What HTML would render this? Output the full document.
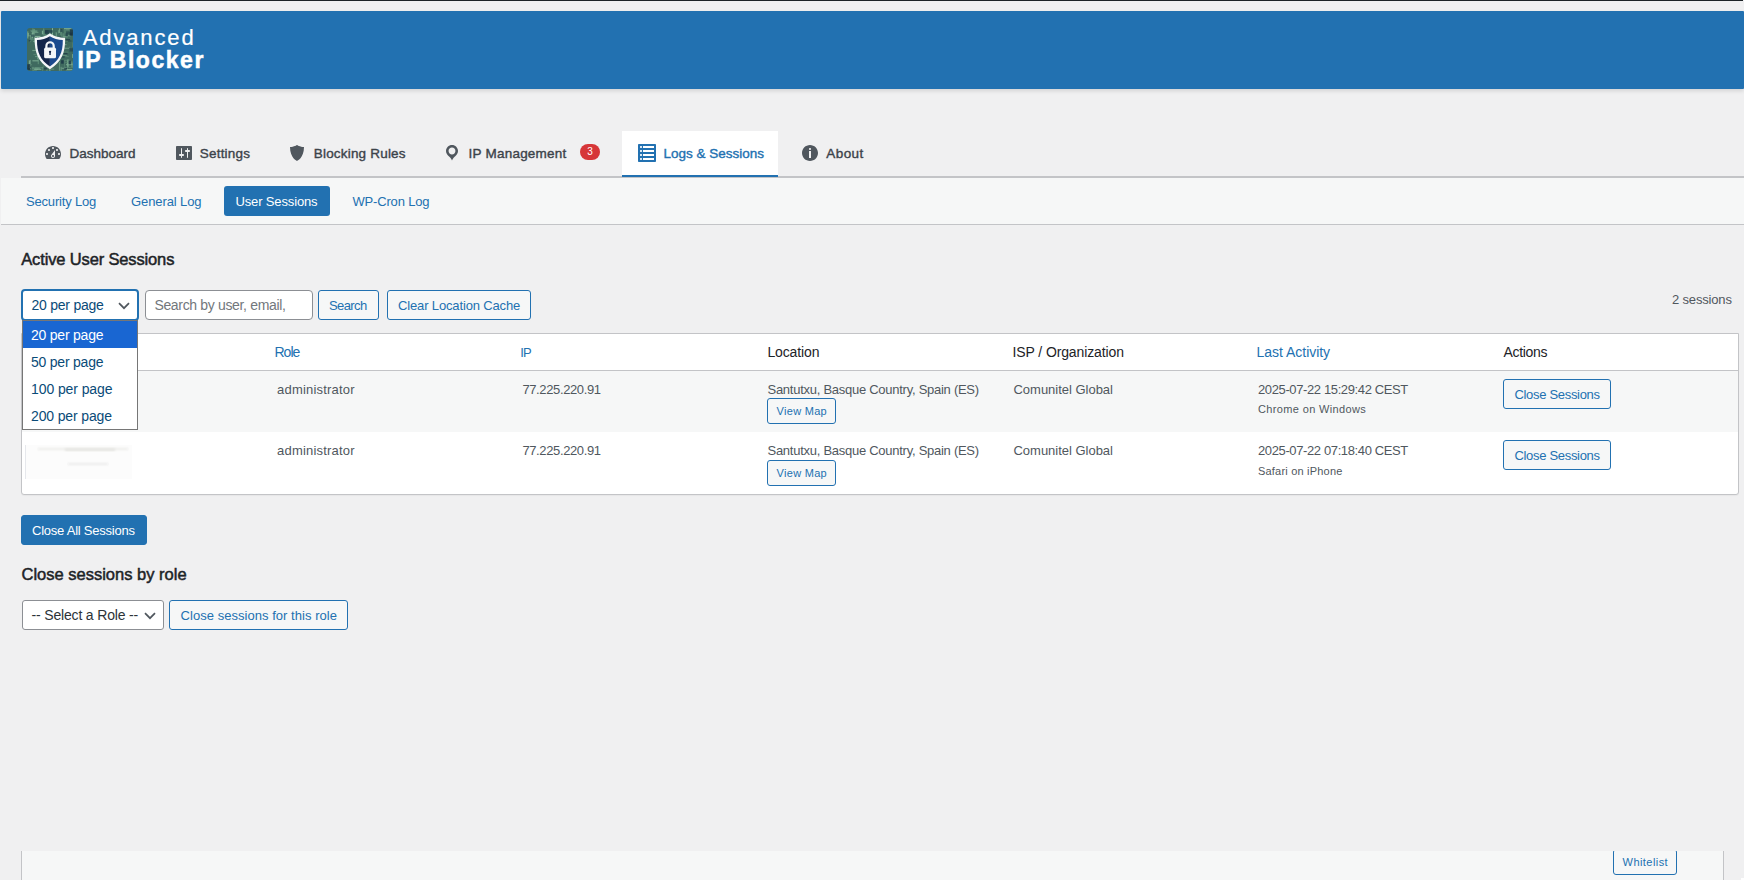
<!DOCTYPE html>
<html lang="en">
<head>
<meta charset="utf-8">
<title>Advanced IP Blocker - User Sessions</title>
<style>
*{box-sizing:border-box;margin:0;padding:0}
html,body{width:1744px;height:880px;overflow:hidden;background:#f0f0f1;font-family:"Liberation Sans",sans-serif;font-size:13px;color:#3c434a}
body{position:relative}
.abs{position:absolute}
.t{position:absolute;white-space:nowrap;z-index:3;font-weight:400;text-decoration:none;display:block}
.t.z{z-index:7}
.t.b{font-weight:700}
.t.sb{-webkit-text-stroke:0.38px currentColor}
.t.hs1{transform:translateY(0.5px);-webkit-text-stroke:0.2px #fff}
.t.hs2{transform:translateY(0.6px);-webkit-text-stroke:0.5px #fff}
.t.sb2{-webkit-text-stroke:0.5px currentColor}
.topbar{left:0;top:0;width:1743px;height:1px;background:#1d2327}
.header{left:1px;top:11px;width:1743px;height:78px;background:#2271b1;border-radius:1px;box-shadow:0 2px 4px rgba(0,0,0,.12)}
.logo{left:27px;top:28px;width:46px;height:43px;border-radius:3px;overflow:hidden}
.tabline{left:21px;top:176px;width:1723px;height:2px;background:#c3c4c7}
.tabact{left:622px;top:131px;width:156px;height:46px;background:#fff;border-bottom:2px solid #2271b1}
.ico{position:absolute;top:143px;width:20px;height:20px;fill:#50575e}
.badge{left:580px;top:144px;background:#d63638;color:#fff;font-size:10px;border-radius:8px;width:20px;height:16px;line-height:16px;text-align:center}
.subnav{left:1px;top:178px;width:1743px;height:47px;background:#f6f7f7;border-bottom:1px solid #c3c4c7}
.pill{left:224px;top:186px;width:106px;height:30px;background:#2271b1;border-radius:3px}
.btn{height:30px;border:1px solid #2271b1;border-radius:3px;background:#f6f7f7}
.btn.primary{background:#2271b1}
.sel{height:30px;border:1px solid #8c8f94;border-radius:3px;background:#fff}
.sel.focus{border:2px solid #2271b1;border-radius:4px}
.chev{position:absolute}
.inp{height:30px;border:1px solid #8c8f94;border-radius:4px;background:#fff}
.table{left:21px;top:333px;width:1718px;height:162px;background:#fff;border:1px solid #c3c4c7;box-shadow:0 1px 1px rgba(0,0,0,.04);border-radius:0 0 3px 3px}
.thead{left:0;top:0;width:1716px;height:37px;border-bottom:1px solid #c3c4c7}
.row1{left:0;top:37px;width:1716px;height:61px;background:#f6f7f7}
.dropdown{left:22px;top:320px;width:116px;height:110px;background:#fff;border:1px solid #767676;z-index:5}
.hl{left:0;top:0;width:114px;height:27px;background:#1966d2}
.blur{left:25px;top:445px;width:107px;height:34px;background:#fcfcfc;border-left:1px solid #e6e8ec;z-index:2;overflow:hidden}
.blur i{position:absolute;display:block;filter:blur(1.2px)}
.bottom{left:21px;top:851px;width:1703px;height:40px;background:#f6f7f7;border-left:1px solid #c3c4c7;border-right:1px solid #c3c4c7;overflow:hidden}
</style>
</head>
<body>
<div class="abs topbar"></div>

<header>
<div class="abs header"></div>
<svg class="abs logo" viewBox="0 0 46 43">
<rect width="46" height="43" fill="#3f6a5f"/>
<rect x="14.9" y="2.7" width="1.2" height="3.6" fill="#7fb095" opacity="0.91"/>
<rect x="9.9" y="8.9" width="1.2" height="5.5" fill="#7fb095" opacity="0.93"/>
<rect x="29.0" y="4.7" width="0.8" height="8.9" fill="#6a9c84" opacity="0.67"/>
<rect x="6.6" y="0.9" width="1.2" height="3.6" fill="#6a9c84" opacity="0.70"/>
<rect x="25.2" y="7.6" width="1" height="6.2" fill="#5f907a" opacity="0.78"/>
<rect x="20.8" y="2.4" width="1" height="3.5" fill="#5f907a" opacity="0.90"/>
<rect x="33.6" y="38.8" width="1" height="4.0" fill="#6a9c84" opacity="0.92"/>
<rect x="19.4" y="30.7" width="1" height="5.0" fill="#5f907a" opacity="0.78"/>
<rect x="21.0" y="17.5" width="1.2" height="3.4" fill="#8dbb9f" opacity="0.81"/>
<rect x="45.7" y="14.3" width="1" height="5.1" fill="#8dbb9f" opacity="0.62"/>
<rect x="5.4" y="0.5" width="1" height="5.4" fill="#7fb095" opacity="0.62"/>
<rect x="18.5" y="15.9" width="1" height="4.7" fill="#8dbb9f" opacity="0.82"/>
<rect x="17.5" y="5.6" width="1" height="4.4" fill="#6a9c84" opacity="0.66"/>
<rect x="0.2" y="3.4" width="1.2" height="7.1" fill="#7fb095" opacity="0.73"/>
<rect x="40.1" y="36.1" width="0.8" height="5.4" fill="#5f907a" opacity="0.80"/>
<rect x="2.9" y="31.9" width="0.8" height="6.6" fill="#7fb095" opacity="0.78"/>
<rect x="24.7" y="7.6" width="0.8" height="6.7" fill="#8dbb9f" opacity="0.93"/>
<rect x="27.7" y="31.0" width="1" height="5.9" fill="#7fb095" opacity="0.61"/>
<rect x="34.5" y="25.6" width="1.2" height="3.1" fill="#8dbb9f" opacity="0.61"/>
<rect x="25.0" y="0.2" width="1" height="7.2" fill="#8dbb9f" opacity="0.91"/>
<rect x="16.4" y="18.6" width="0.8" height="4.3" fill="#6a9c84" opacity="0.88"/>
<rect x="34.0" y="1.8" width="1" height="8.9" fill="#5f907a" opacity="0.65"/>
<rect x="31.9" y="34.0" width="1" height="8.7" fill="#7fb095" opacity="0.64"/>
<rect x="10.4" y="23.1" width="1" height="8.0" fill="#8dbb9f" opacity="0.87"/>
<rect x="3.9" y="5.3" width="0.8" height="5.9" fill="#5f907a" opacity="0.87"/>
<rect x="15.3" y="38.7" width="0.8" height="7.5" fill="#6a9c84" opacity="0.62"/>
<rect x="5.8" y="1.2" width="1.2" height="6.7" fill="#5f907a" opacity="0.81"/>
<rect x="16.1" y="0.5" width="1.2" height="6.9" fill="#6a9c84" opacity="0.72"/>
<rect x="40.1" y="31.9" width="1.2" height="6.0" fill="#8dbb9f" opacity="0.65"/>
<rect x="19.3" y="38.2" width="1.2" height="7.0" fill="#5f907a" opacity="0.88"/>
<rect x="40.4" y="31.4" width="1.2" height="7.7" fill="#7fb095" opacity="0.86"/>
<rect x="6.9" y="1.1" width="1.2" height="5.0" fill="#5f907a" opacity="0.86"/>
<rect x="4.9" y="4.5" width="1.2" height="6.0" fill="#7fb095" opacity="0.85"/>
<rect x="42.0" y="18.7" width="1" height="4.2" fill="#5f907a" opacity="0.75"/>
<rect x="37.1" y="32.2" width="0.8" height="8.5" fill="#5f907a" opacity="0.60"/>
<rect x="5.6" y="3.5" width="1" height="4.3" fill="#7fb095" opacity="0.91"/>
<rect x="7.1" y="5.7" width="0.8" height="8.8" fill="#7fb095" opacity="0.71"/>
<rect x="22.4" y="37.5" width="1" height="9.0" fill="#8dbb9f" opacity="0.72"/>
<rect x="16.4" y="33.3" width="0.8" height="5.6" fill="#5f907a" opacity="0.68"/>
<rect x="28.7" y="4.1" width="0.8" height="8.8" fill="#7fb095" opacity="0.66"/>
<rect x="1.8" y="32.4" width="1.2" height="8.1" fill="#8dbb9f" opacity="0.71"/>
<rect x="24.7" y="34.5" width="1.2" height="3.3" fill="#6a9c84" opacity="0.72"/>
<rect x="3.3" y="7.5" width="0.8" height="6.6" fill="#7fb095" opacity="0.66"/>
<rect x="5.6" y="38.9" width="0.8" height="6.7" fill="#6a9c84" opacity="0.93"/>
<rect x="44.6" y="34.5" width="0.8" height="4.8" fill="#8dbb9f" opacity="0.73"/>
<rect x="30.9" y="2.2" width="1.2" height="3.1" fill="#6a9c84" opacity="0.76"/>
<rect x="11.3" y="24.1" width="1" height="6.0" fill="#8dbb9f" opacity="0.83"/>
<rect x="45.2" y="26.1" width="1" height="3.8" fill="#7fb095" opacity="0.88"/>
<rect x="0.7" y="5.0" width="1" height="3.5" fill="#8dbb9f" opacity="0.79"/>
<rect x="31.9" y="0.4" width="1" height="4.6" fill="#8dbb9f" opacity="0.65"/>
<rect x="44.4" y="33.2" width="1" height="3.5" fill="#6a9c84" opacity="0.65"/>
<rect x="35.7" y="5.3" width="0.8" height="3.3" fill="#8dbb9f" opacity="0.67"/>
<rect x="10.7" y="27.8" width="1.2" height="8.4" fill="#5f907a" opacity="0.86"/>
<rect x="33.2" y="4.0" width="1.2" height="3.3" fill="#5f907a" opacity="0.84"/>
<rect x="37.4" y="1.1" width="1.2" height="8.0" fill="#6a9c84" opacity="0.58"/>
<rect x="39.1" y="35.9" width="6.4" height="1.2" fill="#7fb095" opacity="0.80"/>
<rect x="5.4" y="32.2" width="6.0" height="1.2" fill="#7fb095" opacity="0.81"/>
<rect x="0.5" y="36.4" width="4.4" height="0.8" fill="#6a9c84" opacity="0.85"/>
<rect x="38.0" y="39.2" width="4.7" height="0.8" fill="#6a9c84" opacity="0.58"/>
<rect x="36.0" y="26.7" width="3.8" height="1" fill="#7fb095" opacity="0.74"/>
<rect x="34.8" y="12.5" width="6.1" height="1" fill="#5f907a" opacity="0.74"/>
<rect x="0.9" y="40.3" width="3.1" height="1" fill="#7fb095" opacity="0.88"/>
<rect x="7.7" y="39.4" width="8.6" height="0.8" fill="#7fb095" opacity="0.61"/>
<rect x="5.3" y="21.9" width="8.3" height="1.2" fill="#8dbb9f" opacity="0.64"/>
<rect x="7.2" y="40.8" width="7.1" height="1" fill="#8dbb9f" opacity="0.84"/>
<rect x="37.0" y="0.1" width="7.5" height="1" fill="#7fb095" opacity="0.93"/>
<rect x="34.1" y="16.0" width="5.4" height="1.2" fill="#7fb095" opacity="0.69"/>
<rect x="3.4" y="2.2" width="7.0" height="1.2" fill="#6a9c84" opacity="0.65"/>
<rect x="38.1" y="33.8" width="5.6" height="0.8" fill="#5f907a" opacity="0.92"/>
<rect x="7.5" y="40.1" width="5.5" height="1.2" fill="#6a9c84" opacity="0.81"/>
<rect x="2.3" y="7.3" width="5.5" height="1" fill="#8dbb9f" opacity="0.65"/>
<rect x="5.9" y="12.9" width="6.3" height="1" fill="#7fb095" opacity="0.62"/>
<rect x="35.7" y="23.7" width="5.7" height="1" fill="#5f907a" opacity="0.72"/>
<rect x="7.0" y="3.9" width="4.4" height="1" fill="#6a9c84" opacity="0.90"/>
<rect x="16.6" y="9.0" width="4.6" height="0.8" fill="#5f907a" opacity="0.66"/>
<rect x="20.1" y="34.0" width="8.1" height="0.8" fill="#8dbb9f" opacity="0.91"/>
<rect x="39.2" y="36.5" width="8.2" height="0.8" fill="#6a9c84" opacity="0.56"/>
<rect x="18.9" y="21.1" width="3.4" height="1.2" fill="#5f907a" opacity="0.94"/>
<rect x="6.2" y="41.8" width="3.7" height="1.2" fill="#5f907a" opacity="0.58"/>
<rect x="5.0" y="39.6" width="6.9" height="1" fill="#6a9c84" opacity="0.80"/>
<rect x="4.2" y="3.0" width="6.1" height="1.2" fill="#6a9c84" opacity="0.71"/>
<rect x="38.8" y="42.8" width="4.7" height="1" fill="#6a9c84" opacity="0.74"/>
<rect x="38.4" y="27.9" width="3.3" height="0.8" fill="#5f907a" opacity="0.90"/>
<rect x="34.6" y="39.8" width="4.4" height="0.8" fill="#8dbb9f" opacity="0.84"/>
<rect x="37.2" y="31.8" width="6.0" height="0.8" fill="#5f907a" opacity="0.94"/>
<rect x="2.5" y="11.4" width="8.3" height="0.8" fill="#5f907a" opacity="0.79"/>
<rect x="7.2" y="40.8" width="3.9" height="1" fill="#7fb095" opacity="0.64"/>
<rect x="7.8" y="7.9" width="5.7" height="1.2" fill="#8dbb9f" opacity="0.84"/>
<rect x="8.0" y="28.1" width="6.1" height="1" fill="#7fb095" opacity="0.67"/>
<rect x="40.7" y="7.3" width="3.0" height="1" fill="#7fb095" opacity="0.69"/>
<rect x="7.6" y="16.3" width="7.6" height="1" fill="#5f907a" opacity="0.59"/>
<rect x="35.6" y="8.3" width="5.2" height="1" fill="#7fb095" opacity="0.80"/>
<rect x="39.0" y="1.5" width="3.4" height="0.8" fill="#8dbb9f" opacity="0.63"/>
<rect x="38.8" y="41.2" width="6.7" height="1" fill="#8dbb9f" opacity="0.92"/>
<rect x="23.8" y="40.7" width="3.4" height="0.8" fill="#7fb095" opacity="0.74"/>
<rect x="41.6" y="39.3" width="7.9" height="0.8" fill="#5f907a" opacity="0.62"/>
<rect x="6.4" y="26.1" width="5.0" height="1" fill="#5f907a" opacity="0.69"/>
<rect x="6.3" y="10.6" width="3.4" height="0.8" fill="#5f907a" opacity="0.77"/>
<rect x="2.6" y="11.4" width="3.5" height="0.8" fill="#5f907a" opacity="0.75"/>
<rect x="37.6" y="19.8" width="8.3" height="0.8" fill="#7fb095" opacity="0.86"/>
<rect x="12.6" y="11.2" width="2.4" height="1.9" fill="#2f5656" opacity="0.67"/>
<rect x="10.6" y="9.8" width="2.0" height="3.7" fill="#27484f" opacity="0.71"/>
<rect x="17.0" y="39.7" width="3.3" height="1.8" fill="#1f3b49" opacity="0.83"/>
<rect x="42.6" y="4.1" width="3.2" height="3.5" fill="#183040" opacity="0.92"/>
<rect x="1.7" y="11.7" width="1.9" height="1.7" fill="#27484f" opacity="0.93"/>
<rect x="16.0" y="34.6" width="3.1" height="1.9" fill="#1f3b49" opacity="0.64"/>
<rect x="25.6" y="24.8" width="2.3" height="2.2" fill="#27484f" opacity="0.62"/>
<rect x="43.0" y="1.5" width="4.1" height="3.8" fill="#1f3b49" opacity="0.89"/>
<rect x="17.6" y="14.9" width="3.7" height="1.4" fill="#1f3b49" opacity="0.88"/>
<rect x="23.6" y="2.5" width="1.9" height="2.3" fill="#27484f" opacity="0.82"/>
<rect x="3.9" y="6.5" width="3.9" height="2.3" fill="#2f5656" opacity="0.83"/>
<rect x="18.0" y="2.1" width="4.1" height="3.7" fill="#183040" opacity="0.75"/>
<rect x="37.2" y="39.9" width="2.8" height="1.8" fill="#183040" opacity="0.67"/>
<rect x="0.3" y="36.1" width="3.0" height="3.5" fill="#183040" opacity="0.80"/>
<rect x="15.7" y="30.9" width="2.0" height="1.3" fill="#27484f" opacity="0.82"/>
<rect x="39.1" y="3.6" width="3.7" height="2.2" fill="#27484f" opacity="0.65"/>
<rect x="12.2" y="20.8" width="4.7" height="1.5" fill="#183040" opacity="0.86"/>
<rect x="34.1" y="32.2" width="2.6" height="3.5" fill="#1f3b49" opacity="0.94"/>
<rect x="20.8" y="2.1" width="4.7" height="2.3" fill="#27484f" opacity="0.82"/>
<rect x="36.8" y="24.8" width="3.7" height="1.7" fill="#183040" opacity="0.66"/>
<rect x="9.4" y="16.0" width="3.3" height="2.3" fill="#1f3b49" opacity="0.65"/>
<rect x="41.7" y="32.6" width="2.2" height="3.7" fill="#1f3b49" opacity="0.83"/>
<rect x="13.9" y="15.6" width="3.1" height="3.6" fill="#2f5656" opacity="0.83"/>
<rect x="13.3" y="10.0" width="2.9" height="2.2" fill="#183040" opacity="0.66"/>
<rect x="0.2" y="39.4" width="3.1" height="2.5" fill="#183040" opacity="0.89"/>
<rect x="34.9" y="16.0" width="1.7" height="2.2" fill="#2f5656" opacity="0.63"/>
<rect x="19.0" y="20.4" width="1.6" height="3.0" fill="#1f3b49" opacity="0.92"/>
<rect x="13.5" y="28.8" width="1.8" height="3.3" fill="#183040" opacity="0.83"/>
<rect x="33.7" y="1.0" width="1.7" height="2.9" fill="#1f3b49" opacity="0.67"/>
<rect x="42.2" y="19.7" width="4.8" height="3.8" fill="#27484f" opacity="0.84"/>
<rect x="31.0" y="8.8" width="4.4" height="2.9" fill="#2f5656" opacity="0.66"/>
<rect x="38.6" y="11.0" width="4.4" height="1.6" fill="#183040" opacity="0.67"/>
<rect x="11.3" y="20.2" width="2.6" height="1.3" fill="#27484f" opacity="0.74"/>
<rect x="27.4" y="11.1" width="2.6" height="2.3" fill="#2f5656" opacity="0.64"/>
<rect x="22.8" y="25.5" width="2.8" height="3.6" fill="#1f3b49" opacity="0.69"/>
<rect x="23.0" y="34.3" width="4.1" height="2.2" fill="#183040" opacity="0.95"/>
<rect x="24.8" y="14.4" width="4.2" height="2.4" fill="#27484f" opacity="0.82"/>
<rect x="41.2" y="11.9" width="3.3" height="2.1" fill="#2f5656" opacity="0.86"/>
<rect x="32.1" y="8.9" width="2.5" height="3.0" fill="#183040" opacity="0.78"/>
<rect x="38.5" y="5.3" width="2.3" height="3.0" fill="#1f3b49" opacity="0.62"/>
<rect x="24.4" y="12.1" width="3.3" height="2.7" fill="#183040" opacity="0.80"/>
<rect x="25.3" y="8.2" width="3.7" height="2.5" fill="#27484f" opacity="0.60"/>
<rect x="34.5" y="28.3" width="3.1" height="1.4" fill="#27484f" opacity="0.90"/>
<rect x="33.6" y="16.1" width="2.4" height="1.2" fill="#2f5656" opacity="0.81"/>
<rect x="24.9" y="24.1" width="3.3" height="2.6" fill="#27484f" opacity="0.92"/>
<path d="M22.9 5.300 C19.200 8.300 13 9.800 7.700 9.800 C7.200 24.500 11.600 34.600 22.900 41.300 C34.200 34.600 38.600 24.500 38.100 9.800 C32.800 9.800 26.600 8.300 22.900 5.300Z" fill="#f4f6f9"/>
<path d="M22.9 8.200 C19.500 10.500 14.700 11.900 10 12.100 C9.800 24.300 13.600 32.700 22.900 38.500Z" fill="#14254a"/>
<path d="M22.9 8.200 C26.300 10.500 31.100 11.900 35.800 12.100 C36 24.300 32.200 32.700 22.900 38.500Z" fill="#1b4a8e"/>
<path d="M19.400 20.500 v-2.600 a3.650 3.650 0 0 1 7.300 0 v2.600" fill="none" stroke="#f4f6f9" stroke-width="2.200"/>
<rect x="17.100" y="19.600" width="11.900" height="10.700" rx="1.600" fill="#f4f6f9"/>
<circle cx="23.050" cy="23.800" r="1.150" fill="#14254a"/><rect x="22.350" y="24" width="1.400" height="3" fill="#14254a"/>
</svg>
<span id="b1" class="t hs1" style="left:82.70px;top:22.38px;font-size:22px;line-height:30px;color:#ffffff;letter-spacing:1.871px">Advanced</span>
<span id="b2" class="t b hs2" style="left:77.40px;top:44.03px;font-size:23px;line-height:30px;color:#ffffff;letter-spacing:1.544px">IP Blocker</span>
</header>

<nav class="tabs">
  <div class="abs tabline"></div>
  <div class="abs tabact"></div>
  <svg class="ico" style="left:43px" viewBox="0 0 20 20"><path d="M3.76 16h12.48c1.1-1.37 1.76-3.11 1.76-5 0-4.42-3.58-8-8-8s-8 3.58-8 8c0 1.89.66 3.63 1.76 5zM10 4c.55 0 1 .45 1 1s-.45 1-1 1-1-.45-1-1 .45-1 1-1zM6 6c.55 0 1 .45 1 1s-.45 1-1 1-1-.45-1-1 .45-1 1-1zm8 0c.55 0 1 .45 1 1s-.45 1-1 1-1-.45-1-1 .45-1 1-1zm-5.370 5.550L12 7v6c0 1.100-.9 2-2 2s-2-.9-2-2c0-.57.240-1.080.63-1.450zM4 10c.55 0 1 .45 1 1s-.45 1-1 1-1-.45-1-1 .45-1 1-1zm12 0c.55 0 1 .45 1 1s-.45 1-1 1-1-.45-1-1 .45-1 1-1zm-5 3c0-.55-.45-1-1-1s-1 .45-1 1 .45 1 1 1 1-.45 1-1z"/></svg>
  <svg class="ico" style="left:174px" viewBox="0 0 20 20"><path d="M18 16V4c0-.55-.45-1-1-1H3c-.55 0-1 .45-1 1v12c0 .55.45 1 1 1h14c.55 0 1-.45 1-1zM8 11h1c.55 0 1 .45 1 1s-.45 1-1 1H8v1.500c0 .28-.22.5-.5.5s-.5-.22-.5-.5V13H6c-.55 0-1-.45-1-1s.45-1 1-1h1V5.500c0-.28.22-.5.5-.5s.5.220.5.500V11zm5-2h-1c-.55 0-1-.45-1-1s.45-1 1-1h1V5.500c0-.28.22-.5.5-.5s.5.220.5.500V7h1c.55 0 1 .45 1 1s-.45 1-1 1h-1v5.500c0 .28-.22.5-.5.5s-.5-.22-.5-.5V9z"/></svg>
  <svg class="ico" style="left:287px" viewBox="0 0 20 20"><path d="M10 2s3 2 7 2c0 11-7 14-7 14S3 15 3 4c4 0 7-2 7-2z"/></svg>
  <svg class="ico" style="left:442px" viewBox="0 0 20 20"><path d="M10 2C6.690 2 4 4.690 4 8c0 2.020 1.170 3.710 2.530 4.890.43.370 1.180.960 1.850 1.830.74.970 1.410 2.010 1.620 2.710.21-.7.880-1.740 1.620-2.710.67-.87 1.420-1.460 1.850-1.830C14.830 11.710 16 10.020 16 8c0-3.310-2.690-6-6-6zm0 2.560c1.900 0 3.440 1.540 3.440 3.440S11.900 11.440 10 11.440 6.560 9.900 6.560 8 8.100 4.560 10 4.560z"/></svg>
  <div class="abs badge">3</div>
  <svg class="ico" style="left:637px;fill:#2271b1" viewBox="0 0 20 20"><path d="M2 19h16c.55 0 1-.45 1-1V2c0-.55-.45-1-1-1H2c-.55 0-1 .45-1 1v16c0 .55.45 1 1 1zM4 3c.55 0 1 .45 1 1s-.45 1-1 1-1-.45-1-1 .45-1 1-1zm13 0v2H6V3h11zM4 7c.55 0 1 .45 1 1s-.45 1-1 1-1-.45-1-1 .45-1 1-1zm13 0v2H6V7h11zM4 11c.55 0 1 .45 1 1s-.45 1-1 1-1-.45-1-1 .45-1 1-1zm13 0v2H6v-2h11zM4 15c.55 0 1 .45 1 1s-.45 1-1 1-1-.45-1-1 .45-1 1-1zm13 0v2H6v-2h11z"/></svg>
  <svg class="ico" style="left:800px" viewBox="0 0 20 20"><path d="M10 2c4.420 0 8 3.580 8 8s-3.580 8-8 8-8-3.580-8-8 3.580-8 8-8zm1 4c0-.55-.45-1-1-1s-1 .45-1 1 .45 1 1 1 1-.45 1-1zm0 9V8H9v7h2z"/></svg>
<a id="tb1" class="t sb" style="left:69.50px;top:144.32px;font-size:13.5px;line-height:20px;color:#3c434a;letter-spacing:0.000px">Dashboard</a>
<a id="tb2" class="t sb" style="left:199.75px;top:144.32px;font-size:13.5px;line-height:20px;color:#3c434a;letter-spacing:0.214px">Settings</a>
<a id="tb3" class="t sb" style="left:313.75px;top:144.32px;font-size:13.5px;line-height:20px;color:#3c434a;letter-spacing:0.192px">Blocking Rules</a>
<a id="tb4" class="t sb" style="left:468.50px;top:144.32px;font-size:13.5px;line-height:20px;color:#3c434a;letter-spacing:0.229px">IP Management</a>
<a id="tb5" class="t sb" style="left:663.50px;top:144.32px;font-size:13.5px;line-height:20px;color:#2271b1;letter-spacing:0.000px">Logs &amp; Sessions</a>
<a id="tb6" class="t sb" style="left:826.25px;top:144.32px;font-size:13.5px;line-height:20px;color:#3c434a;letter-spacing:0.438px">About</a>
</nav>

<nav class="subtabs">
<div class="abs subnav"></div>
<div class="abs pill"></div>
<a id="sn1" class="t " style="left:26.00px;top:191.50px;font-size:13px;line-height:20px;color:#2271b1;letter-spacing:-0.182px">Security Log</a>
<a id="sn2" class="t " style="left:131.00px;top:191.50px;font-size:13px;line-height:20px;color:#2271b1;letter-spacing:-0.100px">General Log</a>
<a id="sn3" class="t " style="left:235.50px;top:191.50px;font-size:13px;line-height:20px;color:#ffffff;letter-spacing:-0.146px">User Sessions</a>
<a id="sn4" class="t " style="left:352.50px;top:191.50px;font-size:13px;line-height:20px;color:#2271b1;letter-spacing:-0.175px">WP-Cron Log</a>
</nav>

<main>
<section class="sessions">
<h2 id="h1" class="t sb2" style="left:21.25px;top:249.28px;font-size:16.5px;line-height:20px;color:#1d2327;letter-spacing:-0.145px">Active User Sessions</h2>

<div class="abs sel focus" style="left:21px;top:289px;width:118px;height:32px"></div>
<svg class="chev" style="left:118px;top:302px" width="12" height="8" viewBox="0 0 12 8"><path d="M1 1.200 L6 6.200 L11 1.200" fill="none" stroke="#50575e" stroke-width="1.700"/></svg>
<div class="abs inp" style="left:145px;top:290px;width:168px"></div>
<div class="abs btn" style="left:318px;top:290px;width:61px"></div>
<div class="abs btn" style="left:387px;top:290px;width:144px"></div>
<span id="c1" class="t " style="left:31.56px;top:295.15px;font-size:14px;line-height:20px;color:#0a4b78;letter-spacing:-0.250px">20 per page</span>
<span id="c2" class="t " style="left:154.40px;top:295.15px;font-size:14px;line-height:20px;color:#72777c;letter-spacing:-0.333px">Search by user, email,</span>
<span id="c3" class="t " style="left:329.00px;top:295.50px;font-size:13px;line-height:20px;color:#2271b1;letter-spacing:-0.600px">Search</span>
<span id="c4" class="t " style="left:398.00px;top:295.50px;font-size:13px;line-height:20px;color:#2271b1;letter-spacing:-0.144px">Clear Location Cache</span>
<span id="c5" class="t " style="left:1672.00px;top:289.50px;font-size:13px;line-height:20px;color:#50575e;letter-spacing:-0.167px">2 sessions</span>

<div class="abs table">
  <div class="abs thead"></div>
  <div class="abs row1"></div>
</div>
<div class="abs btn" style="left:767px;top:398px;width:69px;height:26px"></div>
<div class="abs btn" style="left:767px;top:460px;width:69px;height:26px"></div>
<div class="abs btn" style="left:1503px;top:379px;width:108px"></div>
<div class="abs btn" style="left:1503px;top:440px;width:108px"></div>
<a id="th1" class="t " style="left:274.50px;top:342.15px;font-size:14px;line-height:20px;color:#2271b1;letter-spacing:-1.000px">Role</a>
<a id="th2" class="t " style="left:520.25px;top:342.50px;font-size:13px;line-height:20px;color:#2271b1;letter-spacing:-0.800px">IP</a>
<span id="th3" class="t " style="left:767.40px;top:342.15px;font-size:14px;line-height:20px;color:#1d2327;letter-spacing:-0.114px">Location</span>
<span id="th4" class="t " style="left:1012.60px;top:342.15px;font-size:14px;line-height:20px;color:#1d2327;letter-spacing:-0.116px">ISP / Organization</span>
<a id="th5" class="t " style="left:1256.60px;top:342.15px;font-size:14px;line-height:20px;color:#2271b1;letter-spacing:-0.034px">Last Activity</a>
<span id="th6" class="t " style="left:1503.60px;top:342.15px;font-size:14px;line-height:20px;color:#1d2327;letter-spacing:-0.333px">Actions</span>
<span id="r1a" class="t " style="left:277.00px;top:379.50px;font-size:13px;line-height:20px;color:#50575e;letter-spacing:0.208px">administrator</span>
<span id="r1b" class="t " style="left:522.40px;top:379.50px;font-size:13px;line-height:20px;color:#50575e;letter-spacing:-0.374px">77.225.220.91</span>
<span id="r1c" class="t " style="left:767.50px;top:379.50px;font-size:13px;line-height:20px;color:#50575e;letter-spacing:-0.265px">Santutxu, Basque Country, Spain (ES)</span>
<span id="r1d" class="t " style="left:1013.50px;top:379.50px;font-size:13px;line-height:20px;color:#50575e;letter-spacing:-0.018px">Comunitel Global</span>
<span id="r1e" class="t " style="left:1258.00px;top:379.50px;font-size:13px;line-height:20px;color:#50575e;letter-spacing:-0.380px">2025-07-22 15:29:42 CEST</span>
<span id="r1f" class="t " style="left:1258.00px;top:399.19px;font-size:11px;line-height:20px;color:#50575e;letter-spacing:0.358px">Chrome on Windows</span>
<span id="r1g" class="t " style="left:776.60px;top:401.19px;font-size:11px;line-height:20px;color:#2271b1;letter-spacing:0.285px">View Map</span>
<span id="r1h" class="t " style="left:1514.40px;top:384.50px;font-size:13px;line-height:20px;color:#2271b1;letter-spacing:-0.307px">Close Sessions</span>
<span id="r2a" class="t " style="left:277.00px;top:440.50px;font-size:13px;line-height:20px;color:#50575e;letter-spacing:0.208px">administrator</span>
<span id="r2b" class="t " style="left:522.40px;top:440.50px;font-size:13px;line-height:20px;color:#50575e;letter-spacing:-0.374px">77.225.220.91</span>
<span id="r2c" class="t " style="left:767.50px;top:440.50px;font-size:13px;line-height:20px;color:#50575e;letter-spacing:-0.265px">Santutxu, Basque Country, Spain (ES)</span>
<span id="r2d" class="t " style="left:1013.50px;top:440.50px;font-size:13px;line-height:20px;color:#50575e;letter-spacing:-0.018px">Comunitel Global</span>
<span id="r2e" class="t " style="left:1258.00px;top:440.50px;font-size:13px;line-height:20px;color:#50575e;letter-spacing:-0.380px">2025-07-22 07:18:40 CEST</span>
<span id="r2f" class="t " style="left:1258.00px;top:461.19px;font-size:11px;line-height:20px;color:#50575e;letter-spacing:0.200px">Safari on iPhone</span>
<span id="r2g" class="t " style="left:776.60px;top:463.19px;font-size:11px;line-height:20px;color:#2271b1;letter-spacing:0.285px">View Map</span>
<span id="r2h" class="t " style="left:1514.40px;top:445.50px;font-size:13px;line-height:20px;color:#2271b1;letter-spacing:-0.307px">Close Sessions</span>
<div class="abs blur"><i style="left:39px;top:3.500px;width:50px;height:1.400px;background:#b4b4ae"></i><i style="left:12px;top:3px;width:90px;height:2px;background:#ececea"></i><i style="left:42px;top:18px;width:40px;height:2px;background:#ebebeb"></i></div>

<div class="abs dropdown"><div class="abs hl"></div></div>
<div id="d1" class="t z" style="left:31.00px;top:325.15px;font-size:14px;line-height:20px;color:#ffffff;letter-spacing:-0.220px">20 per page</div>
<div id="d2" class="t z" style="left:31.00px;top:352.15px;font-size:14px;line-height:20px;color:#0a4b78;letter-spacing:-0.220px">50 per page</div>
<div id="d3" class="t z" style="left:31.00px;top:379.15px;font-size:14px;line-height:20px;color:#0a4b78;letter-spacing:-0.092px">100 per page</div>
<div id="d4" class="t z" style="left:31.00px;top:406.15px;font-size:14px;line-height:20px;color:#0a4b78;letter-spacing:-0.135px">200 per page</div>

<div class="abs btn primary" style="left:21px;top:515px;width:126px"></div>
<span id="l1" class="t " style="left:32.00px;top:520.50px;font-size:13px;line-height:20px;color:#ffffff;letter-spacing:-0.235px">Close All Sessions</span>
</section>

<section class="by-role">
<h2 id="h2" class="t sb2" style="left:21.50px;top:564.28px;font-size:16.5px;line-height:20px;color:#1d2327;letter-spacing:0.000px">Close sessions by role</h2>
<div class="abs sel" style="left:22px;top:600px;width:142px"></div>
<svg class="chev" style="left:144px;top:612px" width="12" height="8" viewBox="0 0 12 8"><path d="M1 1.200 L6 6.200 L11 1.200" fill="none" stroke="#50575e" stroke-width="1.700"/></svg>
<div class="abs btn" style="left:169px;top:600px;width:179px"></div>
<span id="l2" class="t " style="left:31.50px;top:605.15px;font-size:14px;line-height:20px;color:#2c3338;letter-spacing:-0.166px">-- Select a Role --</span>
<span id="l3" class="t " style="left:180.60px;top:605.50px;font-size:13px;line-height:20px;color:#2271b1;letter-spacing:0.037px">Close sessions for this role</span>
</section>


<section class="next-panel">
<div class="abs bottom">
  <div class="abs btn" style="left:1591px;top:-2px;width:64px;height:26px"></div>
</div>

<span id="l4" class="t " style="left:1622.60px;top:852.19px;font-size:11px;line-height:20px;color:#2271b1;letter-spacing:0.435px">Whitelist</span>
</section>
</main>
<div class="abs" style="left:1741px;top:878px;width:3px;height:2px;background:#fff"></div>
</body>
</html>
